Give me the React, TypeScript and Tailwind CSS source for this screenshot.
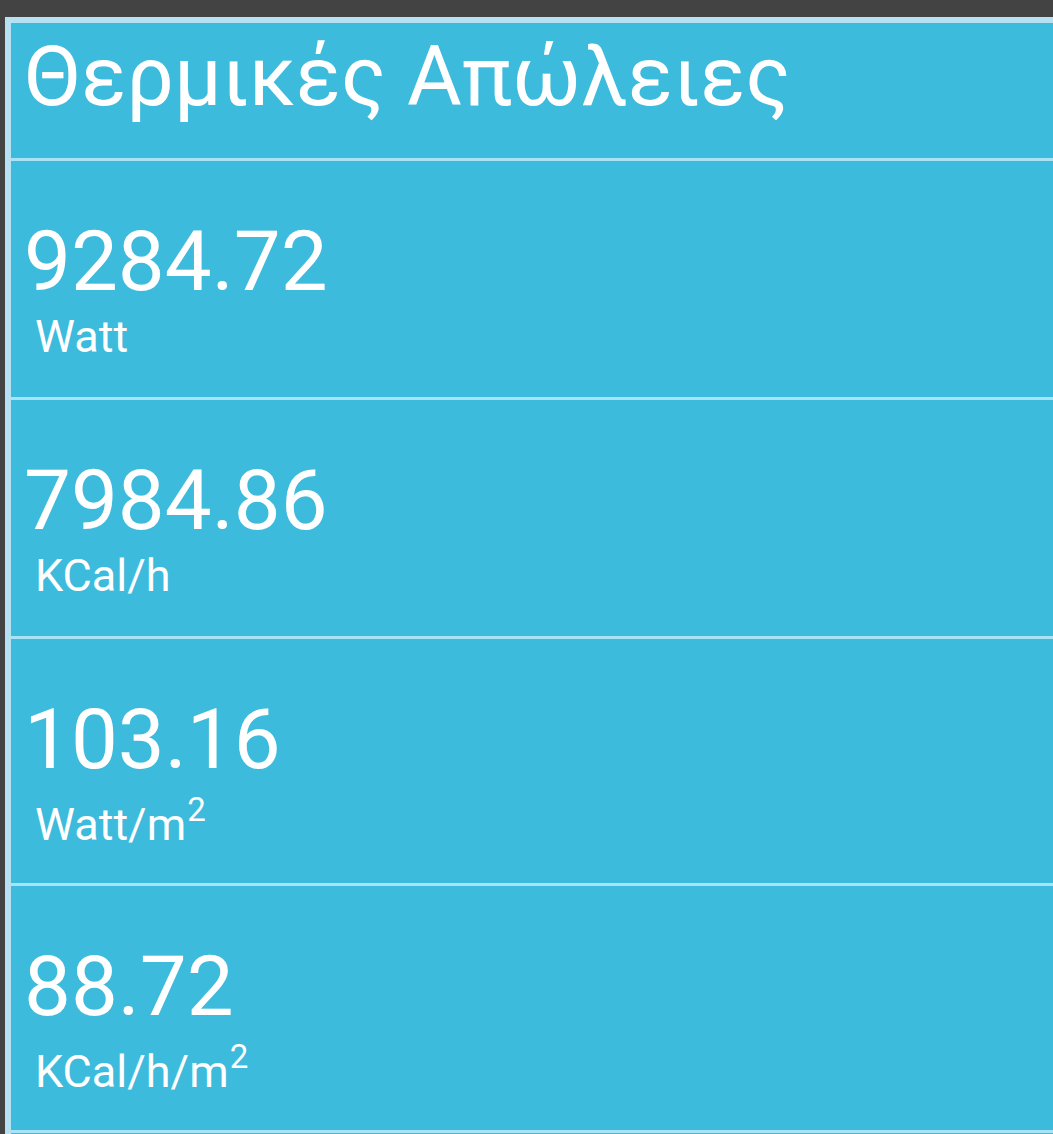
import React from "react";

const rows: { value: string; unit: string; sup?: boolean; h: string }[] = [
  { value: "9284.72", unit: "Watt", h: "h-[239px]" },
  { value: "7984.86", unit: "KCal/h", h: "h-[239px]" },
  { value: "103.16", unit: "Watt/m", sup: true, h: "h-[247px]" },
  { value: "88.72", unit: "KCal/h/m", sup: true, h: "h-[247px]" },
];

export default function App() {
  return (
    <div className="w-[1053px] h-[1134px] bg-[#434343] pt-[17px] pl-[5px] overflow-hidden font-['Roboto',sans-serif] text-white">
      <div className="h-full border-t-[6px] border-l-[6px] border-[#b6e1f3] bg-[#3cbbdc]">
        <div className="h-[138px] border-b-[3px] border-[#a9e3f6] pl-[13px] pt-[12px]">
          <div className="text-[84px] leading-none whitespace-nowrap">Θερμικές Απώλειες</div>
        </div>
        {rows.map((r) => (
          <div key={r.value} className={`${r.h} border-b-[3px] border-[#a9e3f6] pl-[13px] pt-[59px]`}>
            <div className="text-[83.5px] leading-none">{r.value}</div>
            <div className={`${r.sup ? "mt-[20px]" : "mt-[10px]"} pl-[11px] text-[45px] leading-none whitespace-nowrap`}>
              {r.unit}
              {r.sup && <sup className="text-[33px] top-[-19px] ml-[1px]">2</sup>}
            </div>
          </div>
        ))}
      </div>
    </div>
  );
}
